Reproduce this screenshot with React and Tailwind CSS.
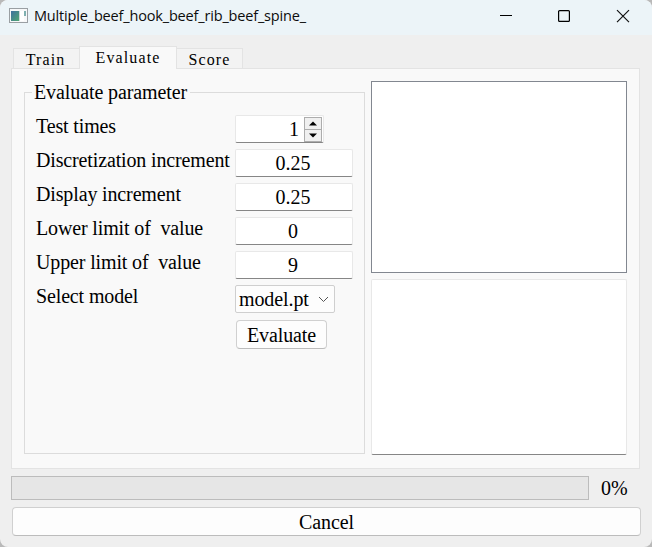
function TitleBar() {
  return (
    <header className="flex h-[35px] shrink-0 items-center bg-[#ecf4f8] pl-[9px]">
      <svg width="19" height="16" viewBox="0 0 19 16" className="mt-[-3px] shrink-0">
        <defs>
          <linearGradient id="app" x1="0" y1="0" x2="1" y2="1">
            <stop offset="0" stopColor="#3f6fa0" />
            <stop offset="1" stopColor="#4fa672" />
          </linearGradient>
        </defs>
        <rect x="0.5" y="0.5" width="18" height="14" fill="#f7f8f9" stroke="#9a9fa3" />
        <rect x="2" y="3" width="8" height="10" fill="url(#app)" />
        <rect x="10" y="3" width="1" height="10" fill="#cfd6da" />
        <rect x="11" y="3" width="4" height="10" fill="#fff" />
        <rect x="15" y="3" width="2" height="5" fill="#7fb0b0" />
      </svg>
      <h1 className="ml-[6px] mt-[-3px] whitespace-nowrap font-['Open_Sans','Noto_Sans',sans-serif] text-[14.5px] leading-5 tracking-[-0.17px] text-[#0c0c0c]">
        Multiple_beef_hook_beef_rib_beef_spine_
      </h1>
      <svg width="132" height="14" viewBox="0 0 132 14" fill="none" className="ml-auto mr-[21px] mt-[-3px] shrink-0">
        <path d="M1 6.5H13" stroke="#000" />
        <rect x="59.6" y="1.6" width="10.8" height="10.8" rx="1" stroke="#000" strokeWidth="1.2" />
        <path d="M118 1.2l12 12M130 1.2l-12 12" stroke="#111" strokeWidth="1.2" />
      </svg>
    </header>
  );
}

function Tab({ label, active }) {
  return (
    <div
      className={
        active
          ? "z-10 -mb-px flex h-[23px] w-[98px] justify-center border border-b-0 border-[#e3e3e3] bg-[#f9f9f9] pt-px"
          : "flex h-[20px] w-[67px] justify-center border border-b-0 border-[#e3e3e3] bg-[#f3f3f3] pt-px pr-px first:-mr-px first:pr-[2px] last:-ml-px last:pr-0"
      }
    >
      <span className="font-['Liberation_Serif',serif] text-[16px] leading-5 tracking-[1.1px]">{label}</span>
    </div>
  );
}

function Field({ value }) {
  return (
    <div className="flex h-7 w-[118px] items-center justify-center rounded-[2px] border border-[#e8e8e8] border-b-[#868686] bg-white pr-[2px]">
      {value}
    </div>
  );
}

function Row({ label, children }) {
  return (
    <div className="flex h-[34px] items-start">
      <div className="w-[199px] shrink-0 whitespace-pre leading-[22px] tracking-[-0.14px]">{label}</div>
      {children}
    </div>
  );
}

function SpinBox() {
  return (
    <div className="flex h-7 w-[89px] items-start justify-end rounded-[2px] border border-[#e8e8e8] border-b-[#868686] bg-white pr-px">
      <span className="mr-[5px] mt-[2px]">1</span>
      <svg width="18" height="25" viewBox="0 0 18 25" className="mt-px">
        <rect x="0.5" y="0.5" width="17" height="24" fill="#f0f0f0" stroke="#adadad" />
        <path d="M0 12.5H18" stroke="#adadad" />
        <path d="M5 8.5L9 4.5l4 4zM5 16.5h8l-4 4z" fill="#000" />
      </svg>
    </div>
  );
}

export default function App() {
  return (
    <div className="h-[547px] w-[652px] bg-[#b9b9b9]">
      <div className="flex h-full flex-col overflow-hidden rounded-[8px] bg-[#efefef] font-['Liberation_Serif',serif] text-[20px] leading-[22px] text-black">
        <TitleBar />
        <div className="flex h-[33px] items-end pl-[13px]">
          <Tab label="Train" />
          <Tab label="Evaluate" active />
          <Tab label="Score" />
        </div>
        <main className="ml-[11px] flex h-[401px] w-[629px] border border-[#e3e3e3] bg-[#f9f9f9] pl-3 pt-3">
          <section className="mt-[11px] h-[362px] w-[341px] border border-[#dcdcdc] pl-[11px]">
            <h2 className="-ml-[4px] -mt-[12px] w-[158px] whitespace-nowrap bg-[#f9f9f9] pl-[2px] tracking-[-0.1px]">
              Evaluate parameter
            </h2>
            <div className="mt-[12px]">
              <Row label="Test times"><SpinBox /></Row>
              <Row label="Discretization increment"><Field value="0.25" /></Row>
              <Row label="Display increment"><Field value="0.25" /></Row>
              <Row label="Lower limit of  value"><Field value="0" /></Row>
              <Row label="Upper limit of  value"><Field value="9" /></Row>
              <Row label="Select model">
                <div className="flex h-7 w-[100px] items-center justify-between rounded-[2px] border border-[#cfcfcf] bg-[#fdfdfd] pl-[3px] pr-[5px] tracking-[-0.1px]">
                  model.pt
                  <svg width="11" height="7" viewBox="0 0 11 7" fill="none">
                    <path d="M1 1l4.5 4.5L10 1" stroke="#555" />
                  </svg>
                </div>
              </Row>
              <button className="ml-[200px] mt-px flex h-[29px] w-[91px] items-center justify-center rounded-[4px] border border-[#d0d0d0] border-b-[#bcbcbc] bg-[#fdfdfd] tracking-[-0.1px]">
                Evaluate
              </button>
            </div>
          </section>
          <div className="ml-[6px] flex flex-col gap-[6px]">
            <div className="h-[192px] w-[256px] border border-[#828790] bg-white" />
            <div className="h-[176px] w-[256px] rounded-[2px] border border-[#e8e8e8] border-b-[#868686] bg-white" />
          </div>
        </main>
        <div className="mt-[7px] flex h-6 items-center pl-[11px]">
          <div className="h-6 w-[578px] border border-[#bcbcbc] bg-[#e6e6e6]" />
          <span className="ml-3">0%</span>
        </div>
        <button className="ml-3 mt-[7px] flex h-[29px] w-[629px] items-center justify-center rounded-[4px] border border-[#d0d0d0] border-b-[#bcbcbc] bg-[#fdfdfd] tracking-[-0.1px]">
          Cancel
        </button>
      </div>
    </div>
  );
}
